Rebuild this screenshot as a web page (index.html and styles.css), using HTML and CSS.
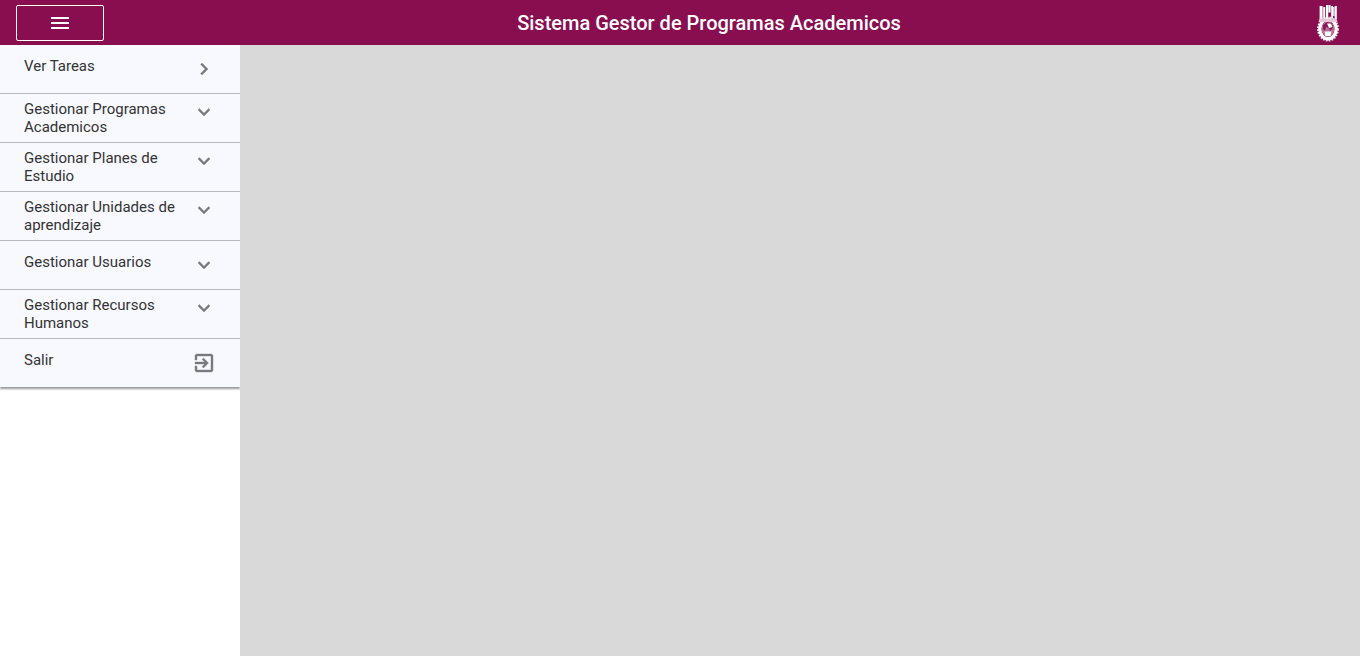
FILE: index.html
```html
<!DOCTYPE html>
<html lang="es">
<head>
<meta charset="utf-8">
<title>Sistema Gestor de Programas Academicos</title>
<link rel="stylesheet" href="styles.css">
</head>
<body>
<header class="topbar">
  <button class="menu-btn" aria-label="Menu">
    <svg width="24" height="24" viewBox="0 0 24 24"><path d="M3 18h18v-2H3v2zm0-5h18v-2H3v2zm0-7v2h18V6H3z" fill="#fff"/></svg>
  </button>
  <h1 class="title">Sistema Gestor de Programas Academicos</h1>
  <svg class="logo" width="24" height="38" viewBox="0 0 24 38" aria-label="IPN">
    <g fill="#fff">
      <rect x="3.6" y="2" width="3" height="13"/><rect x="7.2" y="3" width="2" height="11.5"/>
      <rect x="10" y="1" width="2.2" height="13.5"/><rect x="12.4" y="1" width="2.2" height="7.5"/>
      <rect x="15.2" y="2" width="1.8" height="12.5"/><rect x="17.2" y="3" width="1.2" height="9"/><rect x="18.6" y="2" width="2.2" height="13"/>
    </g>
    <ellipse cx="12" cy="25" rx="8.2" ry="9.8" fill="none" stroke="#fff" stroke-width="3.4"/>
    <ellipse cx="12" cy="25" rx="10" ry="11.6" fill="none" stroke="#fff" stroke-width="2" stroke-dasharray="1.6 1.3" opacity=".9"/>
    <ellipse cx="12" cy="25" rx="6.4" ry="8" fill="#b56f94"/>
    <path d="M7 21l4-3 5 1 1 5-3 3-1-3-3-1-1 4-2-2z" fill="#8a1a57"/>
    <path d="M8.5 27.5h7l-1 4.5h-5z" fill="#fff"/>
    <path d="M11 19.5h4l1.5 3.5-3.5 1z" fill="#fff"/>
    <path d="M3.5 14.5h17l1 3.5h-19z" fill="#e6c6d6"/>
  </svg>
</header>
<div class="layout">
  <nav class="sidebar">
    <ul class="menu">
      <li class="item item-single"><span class="label">Ver Tareas</span>
        <svg class="icon" width="24" height="24" viewBox="0 0 24 24"><path d="M10 6L8.59 7.41 13.17 12l-4.58 4.59L10 18l6-6z"/></svg></li>
      <li class="item"><span class="label">Gestionar Programas Academicos</span>
        <svg class="icon" width="24" height="24" viewBox="0 0 24 24"><path d="M16.59 8.59L12 13.17 7.41 8.59 6 10l6 6 6-6z"/></svg></li>
      <li class="item"><span class="label">Gestionar Planes de Estudio</span>
        <svg class="icon" width="24" height="24" viewBox="0 0 24 24"><path d="M16.59 8.59L12 13.17 7.41 8.59 6 10l6 6 6-6z"/></svg></li>
      <li class="item"><span class="label">Gestionar Unidades de aprendizaje</span>
        <svg class="icon" width="24" height="24" viewBox="0 0 24 24"><path d="M16.59 8.59L12 13.17 7.41 8.59 6 10l6 6 6-6z"/></svg></li>
      <li class="item item-single"><span class="label">Gestionar Usuarios</span>
        <svg class="icon" width="24" height="24" viewBox="0 0 24 24"><path d="M16.59 8.59L12 13.17 7.41 8.59 6 10l6 6 6-6z"/></svg></li>
      <li class="item"><span class="label">Gestionar Recursos Humanos</span>
        <svg class="icon" width="24" height="24" viewBox="0 0 24 24"><path d="M16.59 8.59L12 13.17 7.41 8.59 6 10l6 6 6-6z"/></svg></li>
      <li class="item item-single item-last"><span class="label">Salir</span>
        <svg class="icon" width="24" height="24" viewBox="0 0 24 24"><path d="M10.09 15.59L11.5 17l5-5-5-5-1.41 1.41L12.67 11H3v2h9.67l-2.58 2.59zM19 3H5c-1.11 0-2 .9-2 2v4h2V5h14v14H5v-4H3v4c0 1.1.89 2 2 2h14c1.1 0 2-.9 2-2V5c0-1.1-.9-2-2-2z"/></svg></li>
    </ul>
  </nav>
  <main class="content"></main>
</div>
</body>
</html>
```
FILE: styles.css
```css
* { box-sizing: border-box; }
html, body { margin: 0; height: 100%; overflow: hidden; }
body { font-family: Roboto, "Liberation Sans", sans-serif; background: #fff; display: flex; flex-direction: column; }
.topbar { height: 45px; flex: none; background: #880e4f; display: flex; align-items: center; padding: 0 20px 0 16px; }
.menu-btn { width: 88px; height: 36px; padding: 0; background: transparent; border: 1px solid #fff; border-radius: 2px; display: flex; align-items: center; justify-content: center; }
.title { flex: 1; margin: 0; padding-right: 2px; text-align: center; color: #fff; font-size: 20px; font-weight: 500; line-height: 24px; }
.logo { flex: none; }
.layout { flex: 1; display: flex; min-height: 0; }
.sidebar { width: 240px; flex: none; background: #fff; }
.menu { list-style: none; margin: 0; padding: 0; background: #f8f9ff; box-shadow: 0 2px 2px rgba(0,0,0,.4); }
.item { height: 49px; padding: 6px 24px 0; border-bottom: 1px solid #b8b8bc; display: flex; align-items: flex-start; justify-content: space-between; color: #333; font-size: 15px; line-height: 18px; }
.item-single { padding-top: 12px; }
.item-last { height: 48px; border-bottom: 0; }
.label { width: 156px; }
.icon { flex: none; fill: #78787e; stroke: #78787e; stroke-width: .4; }
.content { flex: 1; background: #d9d9d9; }
```
